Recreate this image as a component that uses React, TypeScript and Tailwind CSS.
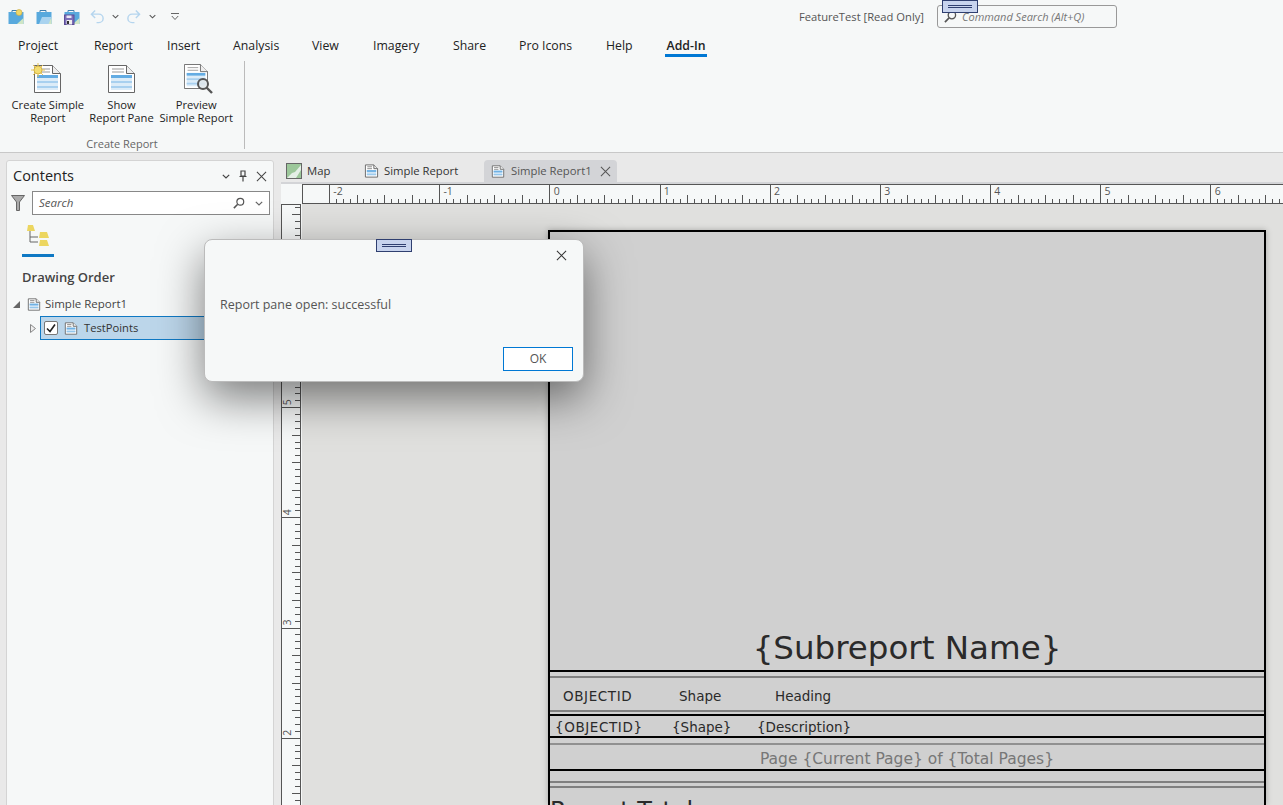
import React from "react"

const TABS = [
  { label: "Project", cls: "w-[42.500px]" },
  { label: "Report", cls: "w-[39.500px]" },
  { label: "Insert", cls: "w-[32.500px]" },
  { label: "Analysis", cls: "w-[45.500px]" },
  { label: "View", cls: "w-[27.500px]" },
  { label: "Imagery", cls: "w-[46.500px]" },
  { label: "Share", cls: "w-[32.500px]" },
  { label: "Pro Icons", cls: "w-[53.500px]" },
  { label: "Help", cls: "w-[25.500px]" },
]

const INCH = 110.17
const STEP = INCH / 16

function ReportIcon({ className }: { className?: string }) {
  return (
    <svg viewBox="0 0 16 16" className={className}>
      <path d="M1.500 1.500h9l4 4v9h-13z" fill="#fff" stroke="#666" />
      <path d="M10.500 1.500v4h4" fill="#eee" stroke="#666" />
      <path d="M3.500 3.500h5M3.500 5.500h5" stroke="#888" />
      <rect x="3" y="7" width="10" height="6" fill="#cfe4f5" />
      <rect x="3" y="7" width="10" height="2" fill="#6fb1e4" />
      <rect x="3" y="11" width="10" height="1" fill="#8cc2ea" />
    </svg>
  )
}

function BigDoc({ className }: { className?: string }) {
  return (
    <svg viewBox="0 0 27 28" className={className}>
      <path d="M.5.5h18l8 8v19H.5z" fill="#fff" stroke="#666" />
      <path d="M18.500.5v8h8" fill="#eee" stroke="#666" />
      <path d="M4 4h12M4 7h12" stroke="#999" />
      <rect x="3" y="10" width="21" height="15" fill="#dcecf8" />
      <rect x="3" y="10" width="21" height="3" fill="#63ace3" />
      <rect x="3" y="16" width="21" height="2" fill="#a8d0ef" />
      <rect x="3" y="21" width="21" height="2" fill="#a8d0ef" />
    </svg>
  )
}

function CreateIcon() {
  return (
    <div className="relative w-[30px] h-[30px] mr-[4px]">
      <BigDoc className="absolute left-[3px] top-[2px] w-[27px] h-[28px]" />
      <svg viewBox="0 0 14 14" className="absolute left-0 top-0 w-[14px] h-[14px]">
        <path d="M7 0v14M0 7h14M2 2l10 10M12 2L2 12" stroke="#e6c45a" strokeWidth="1" />
        <circle cx="7" cy="7" r="4" fill="#f3dd72" stroke="#d7b544" />
      </svg>
    </div>
  )
}

function PreviewIcon() {
  return (
    <div className="relative w-[30px] h-[31px]">
      <BigDoc className="absolute left-[3px] top-0 w-[24px] h-[29px]" />
      <svg viewBox="0 0 17 17" className="absolute left-[15px] top-[15px] w-[17px] h-[17px]">
        <circle cx="7" cy="7" r="5" fill="#dfe6ea" fillOpacity="0.85" stroke="#555" strokeWidth="2" />
        <path d="M11 11l5 5" stroke="#555" strokeWidth="2.400" />
      </svg>
    </div>
  )
}

function ProjectIcon({ kind }: { kind: "new" | "open" | "save" }) {
  return (
    <svg viewBox="0 0 16 16" className="w-[16px] h-[16px]">
      <path d="M4 3V1.500h6V3" fill="none" stroke="#3f7fb0" />
      <rect x="0.500" y="3" width="15" height="12" fill="#58a9dd" />
      <path d="M9 15l6.500-6v6z" fill="#cfe6c5" />
      {kind === "new" && <circle cx="11" cy="3.500" r="3" fill="#f0d768" stroke="#c9a93c" strokeWidth="0.600" />}
      {kind === "open" && <path d="M3 15l3-7h9.500l-3 7z" fill="#a9d3ef" />}
      {kind === "save" && (
        <>
          <rect x="0.500" y="6" width="9.500" height="9.500" fill="#7d6fb8" stroke="#5b4d96" />
          <rect x="2.500" y="11" width="5.500" height="4.500" fill="#eee" />
          <rect x="3" y="12" width="2" height="3" fill="#333" />
          <rect x="2.500" y="6.500" width="5" height="2.500" fill="#e8e6f4" />
        </>
      )}
    </svg>
  )
}

function Chevron({ className, color = "#555" }: { className?: string; color?: string }) {
  return (
    <svg viewBox="0 0 8 5" className={className}>
      <path d="M.8.8L4 4l3.200-3.200" fill="none" stroke={color} strokeWidth="1.200" />
    </svg>
  )
}

function Arrow({ flip }: { flip?: boolean }) {
  return (
    <svg viewBox="0 0 16 16" className={flip ? "w-[15px] h-[15px] -scale-x-100" : "w-[15px] h-[15px]"}>
      <path d="M5.500 1.500L1.500 5.500l4 4M1.500 5.500h8a4.500 4.500 0 0 1 0 9H7" fill="none" stroke="#b5d5ee" strokeWidth="1.500" />
    </svg>
  )
}

function SearchGlyph({ className }: { className?: string }) {
  return (
    <svg viewBox="0 0 14 14" className={className}>
      <circle cx="8.500" cy="5.500" r="4" fill="none" stroke="#555" strokeWidth="1.400" />
      <path d="M5.500 8.500L1 13" stroke="#555" strokeWidth="1.800" />
    </svg>
  )
}

function CloseX({ className, color = "#444" }: { className?: string; color?: string }) {
  return (
    <svg viewBox="0 0 12 12" className={className}>
      <path d="M1 1l10 10M11 1L1 11" stroke={color} strokeWidth="1.100" />
    </svg>
  )
}

function GrabHandle({ className }: { className?: string }) {
  return (
    <div className={`absolute w-[36px] h-[13px] bg-[#c8d4ee] border border-[#2f3f70] flex flex-col justify-center gap-[1px] px-[5px] ${className ?? ""}`}>
      <div className="h-[1px] bg-[#2f3f70]" />
      <div className="h-[1px] bg-[#2f3f70]" />
    </div>
  )
}

function HRuler() {
  const ticks = Array.from({ length: 144 }, (_, i) => i)
  const labels = [-2, -1, 0, 1, 2, 3, 4, 5, 6]
  return (
    <svg width="981" height="20" className="block">
      <rect width="981" height="20" fill="#f6f8f8" />
      <path d="M0 .5H981M0 19.500H981M.5 0V20" stroke="#555" fill="none" />
      {ticks.map(i => {
        const x = Math.round(27 + i * STEP) + 0.5
        const h = i % 16 === 0 ? 20 : i % 4 === 0 ? 9 : 5
        return <path key={i} d={`M${x} ${20 - h}V20`} stroke="#555" fill="none" />
      })}
      {labels.map((n, i) => (
        <text key={n} x={27.3 + i * INCH + 4} y={10.5} fontSize="10.500" fill="#555" fontFamily="Open Sans, sans-serif">
          {n}
        </text>
      ))}
    </svg>
  )
}

function VRuler() {
  const ticks = Array.from({ length: 90 }, (_, i) => i)
  const labels = [6, 5, 4, 3, 2]
  return (
    <svg width="21" height="601" className="block shrink-0">
      <rect width="21" height="601" fill="#f6f8f8" />
      <path d="M.5 0V601M19.500 0V601M0 .5H20" stroke="#555" fill="none" />
      {ticks.map(i => {
        const y = Math.round(93 + (i - 16) * STEP) + 0.5
        const w = i % 16 === 0 ? 20 : i % 4 === 0 ? 9 : 6
        return <path key={i} d={`M${20 - w} ${y}H20`} stroke="#555" fill="none" />
      })}
      {labels.map((n, i) => (
        <text
          key={n}
          transform={`translate(10 ${93 + i * INCH - 2}) rotate(-90)`}
          fontSize="10.500"
          fill="#555"
          fontFamily="Open Sans, sans-serif"
        >
          {n}
        </text>
      ))}
    </svg>
  )
}

function RibbonButton({ icon, lines, className }: { icon: React.ReactNode; lines: string[]; className: string }) {
  return (
    <div className={`flex flex-col items-center ${className}`}>
      <div className="h-[32px] flex items-end justify-center">{icon}</div>
      <div className="mt-[5px] text-[11.200px] leading-[13px] text-center text-[#222] whitespace-nowrap">
        {lines.map(l => (
          <div key={l}>{l}</div>
        ))}
      </div>
    </div>
  )
}

export default function App() {
  return (
    <div className="relative w-[1283px] h-[805px] overflow-hidden bg-[#e9e9e9] font-['Open_Sans',sans-serif] text-[#222]">
      {/* title bar + ribbon */}
      <div className="h-[153px] bg-[#f6f8f8] border-b border-[#c8c8c8] flex flex-col">
        <div className="h-[33px] shrink-0 flex items-center pl-[8px] pr-[166px] relative">
          <ProjectIcon kind="new" />
          <div className="ml-[12px]"><ProjectIcon kind="open" /></div>
          <div className="ml-[12px]"><ProjectIcon kind="save" /></div>
          <div className="ml-[10px]"><Arrow /></div>
          <Chevron className="ml-[7px] w-[7px] h-[5px]" />
          <div className="ml-[7px]"><Arrow flip /></div>
          <Chevron className="ml-[8px] w-[7px] h-[5px]" />
          <svg viewBox="0 0 8 8" className="ml-[15px] w-[8px] h-[8px]">
            <path d="M0 .5h8M.8 3L4 6.500 7.200 3" fill="none" stroke="#666" />
          </svg>
          <span className="ml-auto pt-[1px] text-[11.200px] text-[#555]">FeatureTest [Read Only]</span>
          <div className="ml-[13px] w-[180px] h-[23px] border border-[#999] rounded-[3px] flex items-center pl-[6px]">
            <SearchGlyph className="w-[13px] h-[13px]" />
            <span className="ml-[5px] pt-[1px] text-[11px] italic text-[#777]">Command Search (Alt+Q)</span>
          </div>
          <GrabHandle className="left-[942px] top-0" />
        </div>

        <div className="h-[25px] shrink-0 flex pl-[18px] gap-[33.500px] text-[12.300px]">
          {TABS.map(t => (
            <div key={t.label} className={`${t.cls} pt-[2px] flex items-center whitespace-nowrap`}>
              {t.label}
            </div>
          ))}
          <div className="w-[42px] h-[24px] flex items-center justify-center font-semibold border-b-[3px] border-[#0078d4] pt-[5px] whitespace-nowrap">
            Add-In
          </div>
        </div>

        <div className="flex pl-[8px] pt-[3px]">
          <div className="w-[228px] flex flex-col">
            <div className="flex h-[63px]">
              <RibbonButton className="w-[80px]" icon={<CreateIcon />} lines={["Create Simple", "Report"]} />
              <RibbonButton className="w-[68px]" icon={<BigDoc className="w-[27px] h-[28px]" />} lines={["Show", "Report Pane"]} />
              <RibbonButton className="w-[80px] ml-[1px]" icon={<PreviewIcon />} lines={["Preview", "Simple Report"]} />
            </div>
            <div className="mt-[12px] text-[11px] leading-[16px] text-center text-[#666]">Create Report</div>
          </div>
          <div className="ml-[8px] w-[1px] h-[88px] bg-[#bbb]" />
        </div>
      </div>

      {/* body */}
      <div className="flex h-[652px] pt-[7px] pl-[6px]">
        <div className="w-[268px] h-[650px] bg-[#f6f8f8] border border-[#d4d4d4] rounded-t-[3px] flex flex-col">
          <div className="h-[30px] flex items-center pl-[6px] pr-[6px]">
            <span className="text-[14.500px] text-[#222]">Contents</span>
            <Chevron className="ml-auto w-[8px] h-[5px]" color="#444" />
            <svg viewBox="0 0 10 12" className="ml-[8px] w-[10px] h-[12px]">
              <path d="M3 1h4v5H3zM1.500 6.500h7M5 6.500V11.500" fill="none" stroke="#444" strokeWidth="1.200" />
            </svg>
            <CloseX className="ml-[8px] w-[11px] h-[11px]" />
          </div>
          <div className="flex items-center h-[24px] pl-[4px]">
            <svg viewBox="0 0 14 16" className="w-[14px] h-[16px]">
              <path d="M.5.5h13L8.500 7v8.500h-3V7z" fill="#aaa" stroke="#666" />
            </svg>
            <div className="ml-[7px] w-[238px] h-[24px] bg-white border border-[#888] flex items-center pl-[6px] pr-[6px]">
              <span className="text-[11.500px] italic text-[#555]">Search</span>
              <SearchGlyph className="ml-auto w-[12px] h-[12px]" />
              <Chevron className="ml-[10px] w-[8px] h-[5px]" color="#666" />
            </div>
          </div>
          <div className="ml-[15px] mt-[9px] w-[32px] h-[33px] border-b-[3px] border-[#0f79c4] flex justify-center">
            <svg viewBox="0 0 24 24" className="w-[24px] h-[24px]">
              <path d="M4 7v11h8M4 13h8" fill="none" stroke="#666" />
              <path d="M1 7l1-6h5l2 6z" fill="#ecd660" />
              <path d="M13 14l1-6h7l2 6z" fill="#ecd660" />
              <path d="M13 22l1-6h7l2 6z" fill="#ecd660" />
            </svg>
          </div>
          <div className="ml-[15px] mt-[11px] text-[13px] font-semibold text-[#444] leading-[18px]">Drawing Order</div>
          <div className="mt-[6px] h-[24px] flex items-center pl-[6px]">
            <svg viewBox="0 0 7 7" className="w-[7px] h-[7px]"><path d="M7 0v7H0z" fill="#666" /></svg>
            <ReportIcon className="ml-[7px] w-[14px] h-[15px]" />
            <span className="ml-[4px] text-[11.500px] text-[#444]">Simple Report1</span>
          </div>
          <div className="h-[24px] flex items-center">
            <svg viewBox="0 0 6 9" className="ml-[23px] w-[6px] h-[9px]"><path d="M.5.5l5 4-5 4z" fill="#eee" stroke="#888" /></svg>
            <div className="ml-[4px] flex-1 h-[24px] bg-[#bcd6ea] border border-[#0f79c4] flex items-center pl-[3px]">
              <div className="w-[14px] h-[14px] bg-white border border-[#777] rounded-[2px] flex items-center justify-center">
                <svg viewBox="0 0 10 10" className="w-[10px] h-[10px]">
                  <path d="M1 5.500l3 3 5-7" fill="none" stroke="#222" strokeWidth="1.600" />
                </svg>
              </div>
              <ReportIcon className="ml-[6px] w-[14px] h-[15px]" />
              <span className="ml-[6px] text-[11.200px] text-[#333]">TestPoints</span>
            </div>
          </div>
        </div>

        <div className="ml-[7px] flex-1 min-w-0 flex flex-col">
          <div className="h-[22px] flex items-center text-[11.300px] text-[#333]">
            <svg viewBox="0 0 16 16" className="ml-[5px] w-[16px] h-[16px]">
              <rect x="0.500" y="0.500" width="15" height="15" fill="#9cc79a" stroke="#666" />
              <path d="M1 15l5-5 3-1 6-7v5l-5 8z" fill="#e4efe6" />
            </svg>
            <span className="ml-[5px] w-[24px]">Map</span>
            <ReportIcon className="ml-[33px] w-[15px] h-[16px]" />
            <span className="ml-[5px] w-[74px] whitespace-nowrap">Simple Report</span>
            <div className="ml-[26px] w-[133px] h-[23px] bg-[#d3d4d7] rounded-t-[4px] flex items-center pl-[7px] text-[#555]">
              <ReportIcon className="w-[14px] h-[15px]" />
              <span className="ml-[6px]">Simple Report1</span>
              <CloseX className="ml-auto mr-[6px] w-[11px] h-[11px]" color="#555" />
            </div>
          </div>
          <div className="h-[2px] bg-[#d3d4d7]" />
          <div className="flex h-[20px]">
            <div className="w-[21px] bg-[#f6f8f8]" />
            <HRuler />
          </div>
          <div className="flex flex-1 min-h-0">
            <VRuler />
            <div className="flex-1 bg-[#e0e0de] pl-[246px] pt-[26px] pr-[17px]">
              <div className="h-[575px] bg-[#d0d0d0] border-x-2 border-t-2 border-black shadow-[0_0_6px_rgba(0,0,0,0.25)] flex flex-col font-['DejaVu_Sans',sans-serif] overflow-hidden text-[#2a2a2a]">
                <div className="h-[440px] shrink-0 border-b-2 border-black flex items-end justify-center pb-[3px] text-[32.500px] leading-[38px]">
                  {"{Subreport Name}"}
                </div>
                <div className="h-[6px] shrink-0 border-b-2 border-[#808080]" />
                <div className="h-[34px] shrink-0 border-b-2 border-[#808080] flex items-center pl-[13px] pt-[5px] text-[13.500px]">
                  <span className="w-[116px] tracking-[0.6px]">OBJECTID</span>
                  <span className="w-[96px]">Shape</span>
                  <span>Heading</span>
                </div>
                <div className="h-[4px] shrink-0 border-b-2 border-black" />
                <div className="h-[22px] shrink-0 border-b-2 border-black flex items-center pl-[5px] pt-[3px] text-[13.500px]">
                  <span className="w-[117px] tracking-[0.6px]">{"{OBJECTID}"}</span>
                  <span className="w-[85px]">{"{Shape}"}</span>
                  <span>{"{Description}"}</span>
                </div>
                <div className="h-[7px] shrink-0 border-b-2 border-[#909090]" />
                <div className="h-[26px] shrink-0 border-b-2 border-black flex items-center justify-center pt-[6px] text-[15.500px] text-[#777]">
                  {"Page {Current Page} of {Total Pages}"}
                </div>
                <div className="h-[12px] shrink-0 border-b-2 border-[#808080]" />
                <div className="h-[5px] shrink-0 border-b-2 border-[#808080]" />
                <div className="pt-[9px] text-[24px] leading-[28px]">Report Total</div>
              </div>
            </div>
          </div>
        </div>
      </div>

      {/* message box */}
      <div className="absolute left-[204px] top-[239px] w-[380px] h-[143px] bg-[#f6f8f8] rounded-[8px] border border-[#bbb] shadow-[0_16px_45px_rgba(0,0,0,0.5)] flex flex-col">
        <GrabHandle className="left-[171px] -top-px" />
        <div className="h-[30px] flex justify-end items-center pr-[16px]">
          <CloseX className="w-[11px] h-[11px]" color="#333" />
        </div>
        <div className="mt-[25px] pl-[15px] text-[12.500px] leading-[20px] text-[#555]">Report pane open: successful</div>
        <div className="mt-auto mb-[10px] mr-[10px] self-end w-[70px] h-[24px] bg-white border border-[#0078d4] flex items-center justify-center text-[12px] text-[#555]">
          OK
        </div>
      </div>
    </div>
  )
}
